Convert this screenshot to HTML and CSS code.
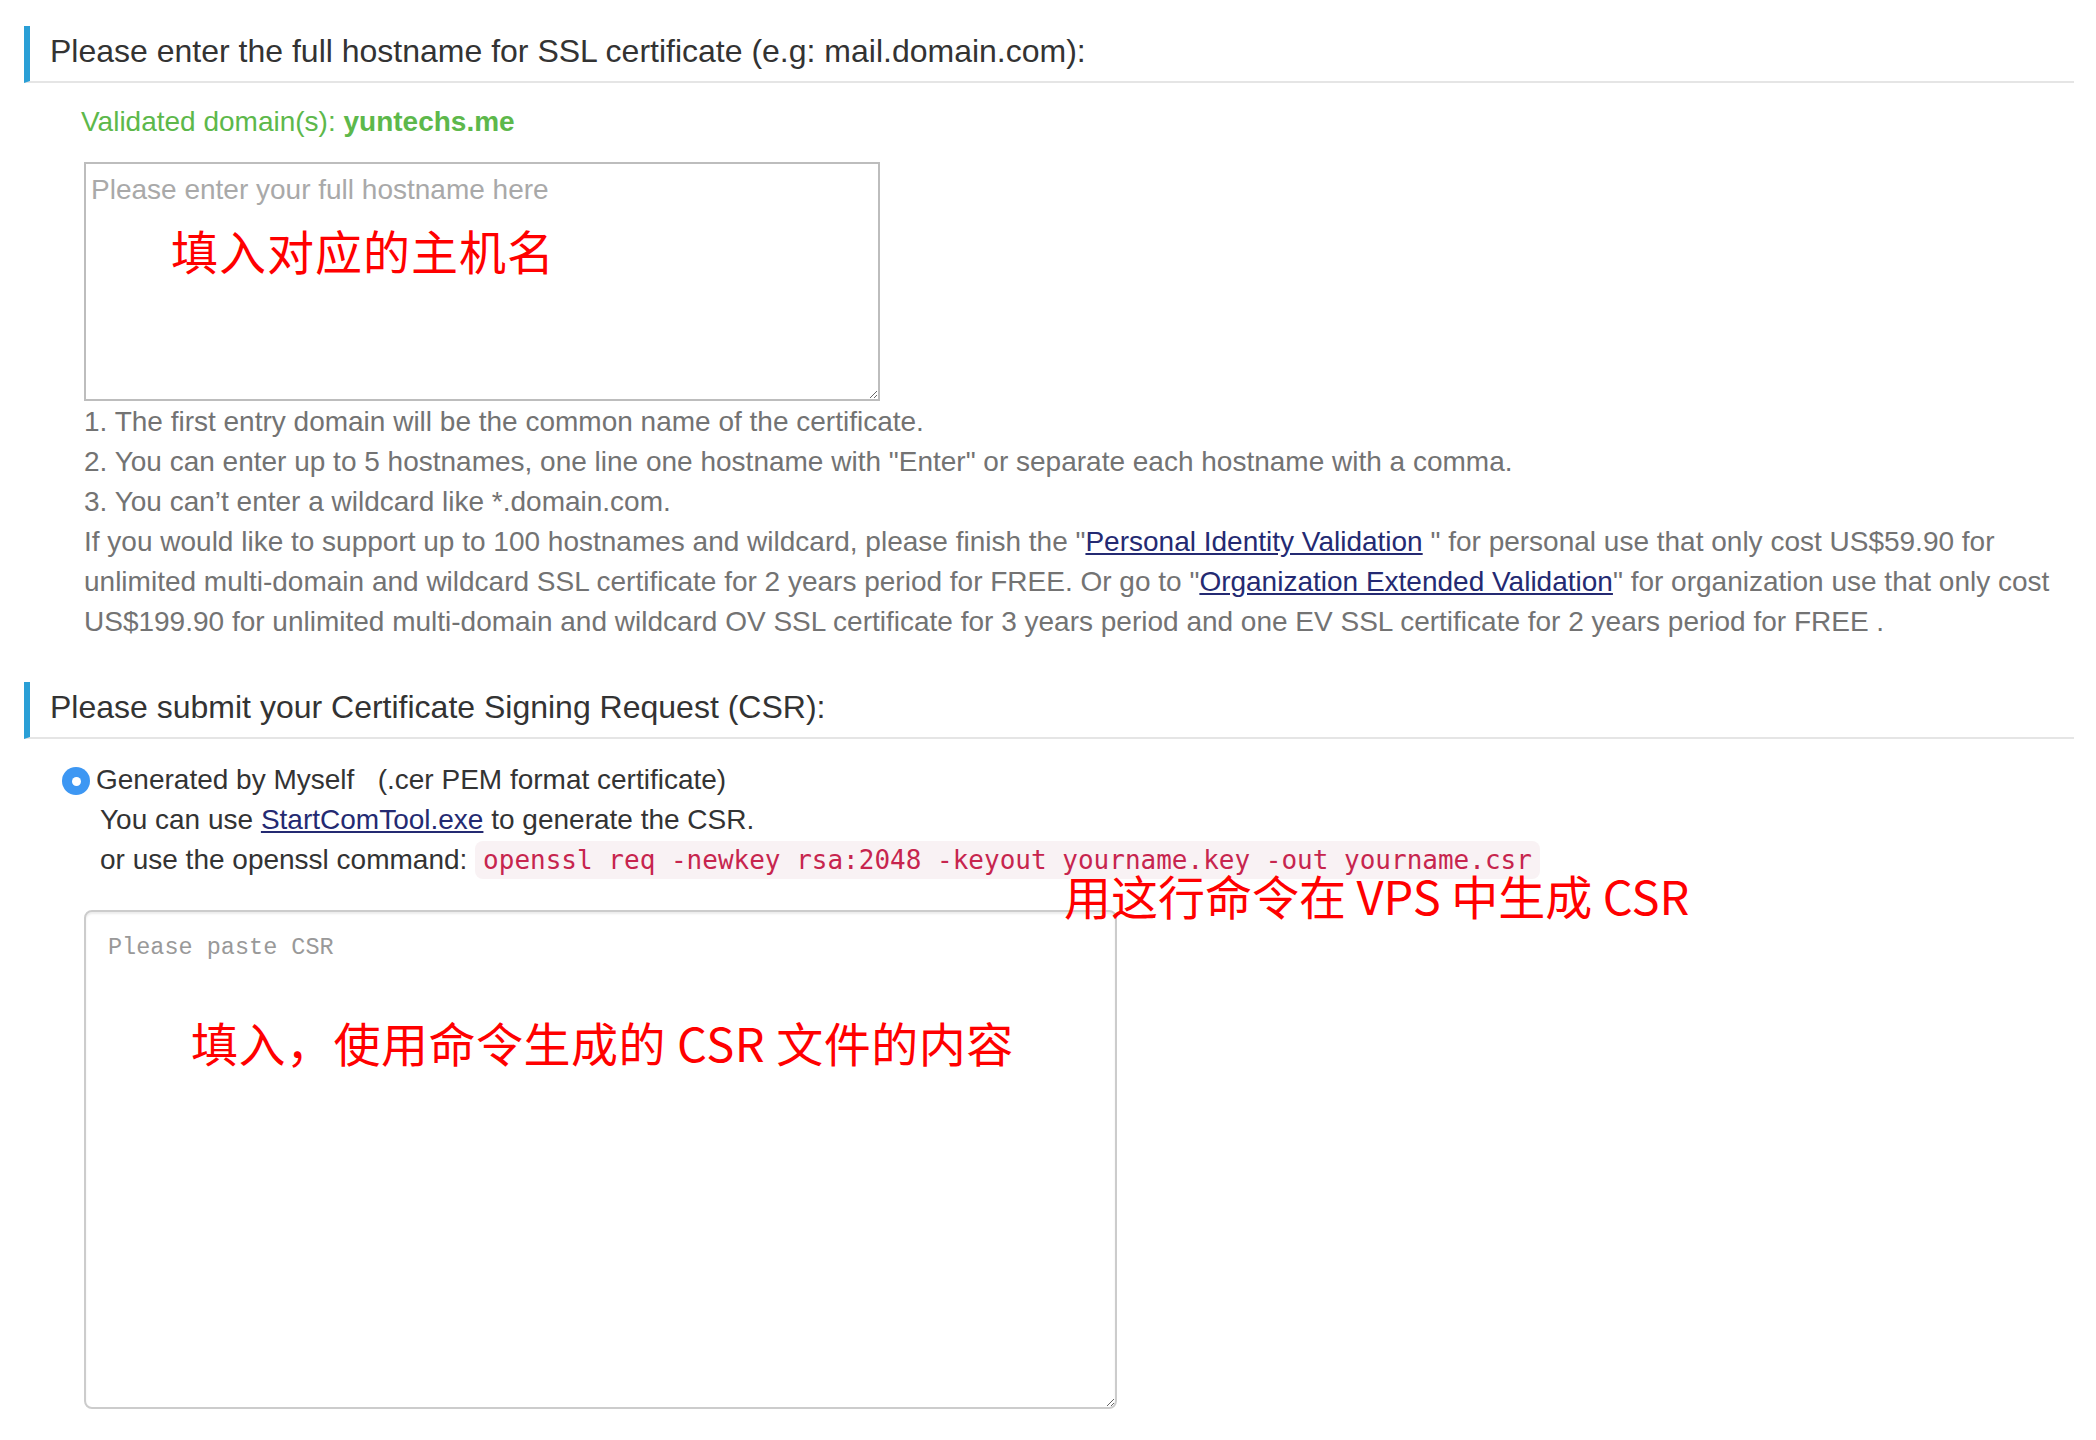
FILE: index.html
```html
<!DOCTYPE html>
<html lang="en">
<head>
<meta charset="utf-8">
<title>SSL certificate request</title>
<link rel="stylesheet" href="styles.css">
</head>
<body>
<div class="page">
  <section class="step">
    <h3 class="step-title">Please enter the full hostname for SSL certificate (e.g: mail.domain.com):</h3>
    <div class="step-body">
      <p class="validated">Validated domain(s): <strong>yuntechs.me</strong></p>
      <div class="field">
        <textarea class="hostname" placeholder="Please enter your full hostname here"></textarea>
        <span class="note note-host">填入对应的主机名</span>
      </div>
      <div class="help">
        <div>1. The first entry domain will be the common name of the certificate.</div>
        <div>2. You can enter up to 5 hostnames, one line one hostname with "Enter" or separate each hostname with a comma.</div>
        <div>3. You can’t enter a wildcard like *.domain.com.</div>
        <div><span>If you would like to support up to 100 hostnames and wildcard, please finish the "</span><a href="#">Personal Identity Validation</a><span> " for personal use that only cost US$59.90 for</span><br><span>unlimited multi-domain and wildcard SSL certificate for 2 years period for FREE. Or go to "</span><a href="#">Organization Extended Validation</a><span>" for organization use that only cost</span><br><span>US$199.90 for unlimited multi-domain and wildcard OV SSL certificate for 3 years period and one EV SSL certificate for 2 years period for FREE .</span></div>
      </div>
    </div>
  </section>

  <section class="step step-csr">
    <h3 class="step-title">Please submit your Certificate Signing Request (CSR):</h3>
    <div class="csr-body">
      <label class="radio"><span class="radio-dot"></span><span>Generated by Myself&nbsp;&nbsp; (.cer PEM format certificate)</span></label>
      <div class="csr-help">
        <div>You can use <a href="#">StartComTool.exe</a> to generate the CSR.</div>
        <div>or use the openssl command: <code>openssl req -newkey rsa:2048 -keyout yourname.key -out yourname.csr</code></div>
      </div>
      <div class="field">
        <textarea class="csr" placeholder="Please paste CSR"></textarea>
        <span class="note note-cmd">用这行命令在 VPS 中生成 CSR</span>
        <span class="note note-csr">填入，使用命令生成的 CSR 文件的内容</span>
      </div>
    </div>
  </section>
</div>
</body>
</html>
```

FILE: styles.css
```css
html, body {
  margin: 0;
  padding: 0;
  background: #fff;
}

body {
  font-family: "Liberation Sans", Arial, "Noto Sans CJK SC", sans-serif;
  font-size: 28px;
  line-height: 40px;
  color: #333;
}

.page {
  padding: 26px 22px 0 24px;
}

.step-title {
  margin: 0;
  font-size: 32px;
  font-weight: normal;
  line-height: 50px;
  padding: 0 0 5px 20px;
  color: #333;
  border-left: 6px solid #2a9fd6;
  border-bottom: 2px solid #e5e5e5;
}

.step-body {
  padding: 19px 0 0 57px;
}

.validated {
  margin: 0 0 20px 0;
  color: #5db84b;
}

.validated strong {
  font-weight: bold;
}

.field {
  position: relative;
}

textarea {
  display: block;
  box-sizing: border-box;
  margin: 0;
  background: #fff;
  color: #333;
  outline: none;
}

.hostname {
  margin-left: 3px;
  width: 796px;
  height: 239px;
  border: 2px solid #bdbdbd;
  padding: 6px 5px;
  font-family: "Liberation Sans", Arial, sans-serif;
  font-size: 28px;
  line-height: 40px;
}

.hostname::placeholder {
  color: #a9a9a9;
}

.note {
  position: absolute;
  font-family: "Noto Sans CJK SC", "Noto Sans", sans-serif;
  font-size: 47px;
  line-height: 1;
  color: #ff0000;
  white-space: nowrap;
  letter-spacing: 0.5px;
}

.note-host {
  left: 90px;
  top: 64px;
  letter-spacing: 1px;
}

.help {
  margin-top: 1px;
  padding-left: 3px;
  color: #737373;
}

.help a,
.csr-help a {
  color: #242a72;
  text-decoration: underline;
}

.step-csr {
  margin-top: 40px;
}

.csr-body {
  padding-top: 21px;
}

.radio {
  display: flex;
  align-items: center;
  gap: 6px;
  padding-left: 38px;
}

.radio-dot {
  width: 28px;
  height: 28px;
  border-radius: 50%;
  background: #3d97f3;
  display: flex;
  align-items: center;
  justify-content: center;
  flex: none;
  margin-top: 2px;
}

.radio-dot::after {
  content: "";
  width: 9px;
  height: 9px;
  border-radius: 50%;
  background: #fff;
}

.csr-help {
  padding-left: 76px;
}

code {
  font-family: "DejaVu Sans Mono", "Liberation Mono", monospace;
  font-size: 26px;
  line-height: 1;
  padding: 4px 8px;
  color: #c7254e;
  background: #f9f2f4;
  border-radius: 8px;
}

.csr-body .field {
  margin-top: 30px;
  margin-left: 60px;
}

.csr {
  width: 1033px;
  height: 499px;
  border: 2px solid #cccccc;
  border-radius: 8px;
  box-shadow: inset 0 2px 2px rgba(0, 0, 0, 0.075);
  padding: 19px 22px;
  font-family: "Liberation Mono", "Courier New", monospace;
  font-size: 23.5px;
  line-height: 1.42857;
}

.csr::placeholder {
  color: #999;
}

.note-cmd {
  left: 980px;
  top: -39px;
  letter-spacing: 0;
}

.note-csr {
  left: 107px;
  top: 108px;
}
```
